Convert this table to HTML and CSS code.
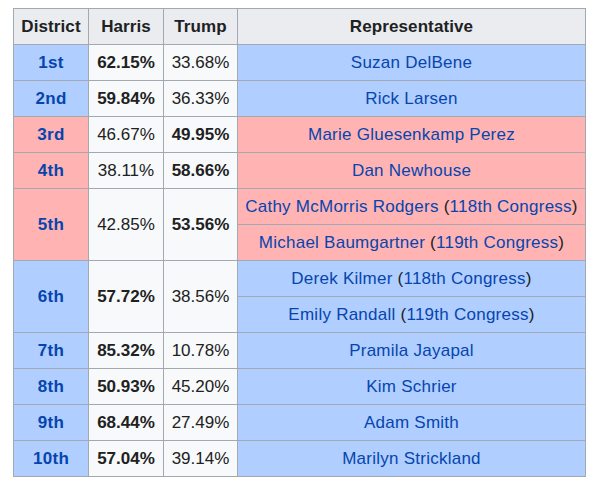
FILE: index.html
```html
<!DOCTYPE html>
<html>
<head>
<meta charset="UTF-8">
<link rel="stylesheet" href="styles.css">
<title>Washington results by district</title>
</head>
<body>
	<table class="wikitable">
		<colgroup>
			<col class="colDistrict">
			<col class="colHarris">
			<col class="colTrump">
			<col class="colRep">
		</colgroup>
		<tr>
			<th>District</th>
			<th>Harris</th>
			<th>Trump</th>
			<th>Representative</th>
		</tr>
		<tr class="dem">
			<td class="district"><a href="#">1st</a></td>
			<td class="num"><b>62.15%</b></td>
			<td class="num">33.68%</td>
			<td class="rep-name"><a href="#">Suzan DelBene</a></td>
		</tr>
		<tr class="dem">
			<td class="district"><a href="#">2nd</a></td>
			<td class="num"><b>59.84%</b></td>
			<td class="num">36.33%</td>
			<td class="rep-name"><a href="#">Rick Larsen</a></td>
		</tr>
		<tr class="rep">
			<td class="district"><a href="#">3rd</a></td>
			<td class="num">46.67%</td>
			<td class="num"><b>49.95%</b></td>
			<td class="rep-name"><a href="#">Marie Gluesenkamp Perez</a></td>
		</tr>
		<tr class="rep">
			<td class="district"><a href="#">4th</a></td>
			<td class="num">38.11%</td>
			<td class="num"><b>58.66%</b></td>
			<td class="rep-name"><a href="#">Dan Newhouse</a></td>
		</tr>
		<tr class="rep">
			<td class="district" rowspan="2"><a href="#">5th</a></td>
			<td class="num" rowspan="2">42.85%</td>
			<td class="num" rowspan="2"><b>53.56%</b></td>
			<td class="rep-name"><a href="#">Cathy McMorris Rodgers</a> (<a href="#">118th Congress</a>)</td>
		</tr>
		<tr class="rep">
			<td class="rep-name"><a href="#">Michael Baumgartner</a> (<a href="#">119th Congress</a>)</td>
		</tr>
		<tr class="dem">
			<td class="district" rowspan="2"><a href="#">6th</a></td>
			<td class="num" rowspan="2"><b>57.72%</b></td>
			<td class="num" rowspan="2">38.56%</td>
			<td class="rep-name"><a href="#">Derek Kilmer</a> (<a href="#">118th Congress</a>)</td>
		</tr>
		<tr class="dem">
			<td class="rep-name"><a href="#">Emily Randall</a> (<a href="#">119th Congress</a>)</td>
		</tr>
		<tr class="dem">
			<td class="district"><a href="#">7th</a></td>
			<td class="num"><b>85.32%</b></td>
			<td class="num">10.78%</td>
			<td class="rep-name"><a href="#">Pramila Jayapal</a></td>
		</tr>
		<tr class="dem">
			<td class="district"><a href="#">8th</a></td>
			<td class="num"><b>50.93%</b></td>
			<td class="num">45.20%</td>
			<td class="rep-name"><a href="#">Kim Schrier</a></td>
		</tr>
		<tr class="dem">
			<td class="district"><a href="#">9th</a></td>
			<td class="num"><b>68.44%</b></td>
			<td class="num">27.49%</td>
			<td class="rep-name"><a href="#">Adam Smith</a></td>
		</tr>
		<tr class="dem">
			<td class="district"><a href="#">10th</a></td>
			<td class="num"><b>57.04%</b></td>
			<td class="num">39.14%</td>
			<td class="rep-name"><a href="#">Marilyn Strickland</a></td>
		</tr>
	</table>
</body>
</html>
```
FILE: styles.css
```css
body{
	margin: 8px;
	background: #ffffff;
	font-family: "Liberation Sans", Arial, sans-serif;
	font-size: 17px;
	color: #202122;
}

.wikitable{
	margin: 0 0 0 5px;
	border-collapse: collapse;
	table-layout: fixed;
	width: 572px;
	border: 1px solid #a2a9b1;
	background: #f8f9fa;
}

.colDistrict{ width: 75px; }
.colHarris{ width: 75px; }
.colTrump{ width: 74px; }
.colRep{ width: 348px; }

.wikitable th,
.wikitable td{
	border: 1px solid #a2a9b1;
	padding: 0 4px;
	height: 35px;
	line-height: 22px;
	text-align: center;
	vertical-align: middle;
	white-space: nowrap;
}

.wikitable th{
	background: #eaecf0;
	font-weight: bold;
	letter-spacing: 0.1px;
}

.wikitable a{
	color: #0645ad;
	text-decoration: none;
}

.wikitable .num{
	background: #f8f9fa;
}

.wikitable .district{
	font-weight: bold;
	letter-spacing: 0.3px;
}

.wikitable .rep-name{
	letter-spacing: 0.25px;
}

.dem td{
	background: #b0ceff;
}

.rep td{
	background: #ffb3b3;
}
```
